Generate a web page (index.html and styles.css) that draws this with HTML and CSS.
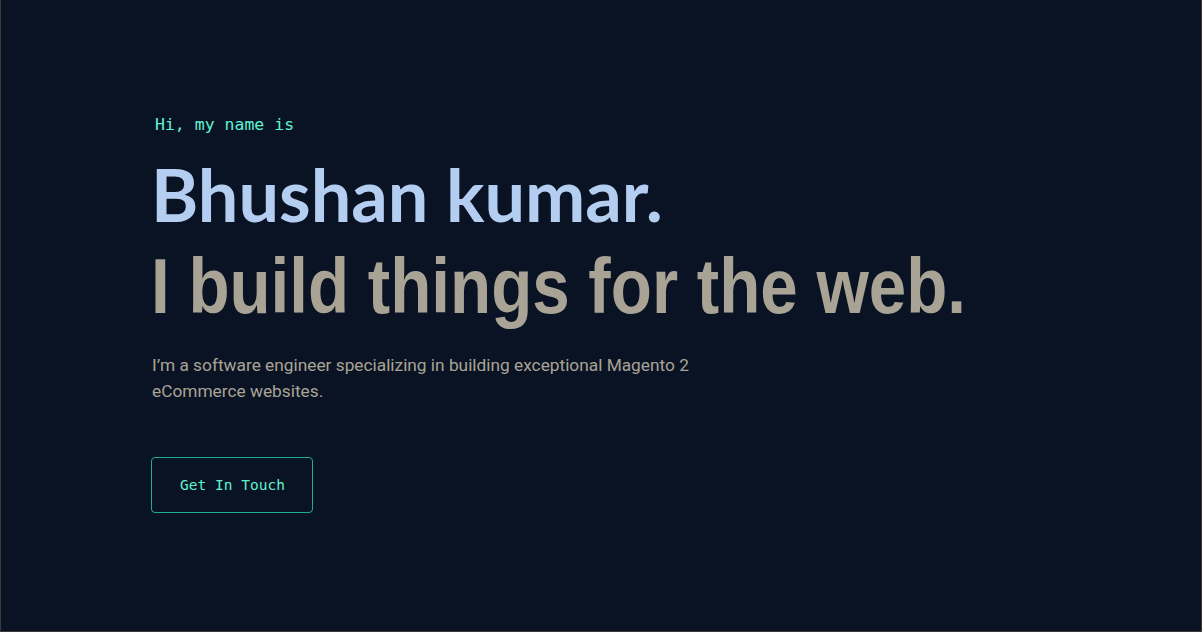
FILE: index.html
```html
<!DOCTYPE html>
<html lang="en">
<head>
<meta charset="utf-8">
<title>Bhushan kumar</title>
<link rel="stylesheet" href="styles.css">
</head>
<body>
<main class="frame">
  <section class="hero">
    <h1 class="greeting">Hi, my name is</h1>
    <h2 class="name">Bhushan kumar.</h2>
    <h3 class="tagline">I build things for the web.</h3>
    <p class="intro">I’m a software engineer specializing in building exceptional Magento 2 eCommerce websites.</p>
    <a class="cta" href="#contact">Get In Touch</a>
  </section>
</main>
</body>
</html>
```
FILE: styles.css
```css
* { box-sizing: border-box; }
html, body { margin: 0; padding: 0; height: 100%; }
body { background: #0a1324; }
.frame {
  height: 632px;
  width: 1202px;
  background: #0a1324;
  border-left: 1px solid #3a3a3a;
  border-right: 1px solid #3a3a3a;
  border-bottom: 1px solid #3a3a3a;
  padding: 110px 0 0 150px;
}
.hero { display: flex; flex-direction: column; align-items: flex-start; }
.greeting {
  margin: 0 0 0 4px;
  font-family: "DejaVu Sans Mono", monospace;
  font-weight: 400;
  font-size: 16.5px;
  line-height: 30px;
  color: #5ef2d2;
}
.name {
  margin: 10px 0 0 0;
  font-family: "Lato", sans-serif;
  font-weight: 700;
  font-size: 72px;
  line-height: 88px;
  color: #b4cef2;
}
.tagline {
  margin: 3px 0 0 0;
  font-family: "Liberation Sans", sans-serif;
  font-weight: 700;
  font-size: 77px;
  line-height: 91px;
  color: #a9a396;
  transform: scaleX(0.874);
  transform-origin: left center;
  white-space: nowrap;
}
.intro {
  margin: 20px 0 0 1px;
  max-width: 560px;
  font-family: "Roboto", sans-serif;
  font-size: 17.3px;
  line-height: 26px;
  color: #a9a396;
}
.cta {
  margin: 53px 0 0 0;
  width: 162px;
  height: 56px;
  display: flex;
  align-items: center;
  justify-content: center;
  padding-left: 1px;
  border: 1px solid #1fae8a;
  border-radius: 4px;
  font-family: "DejaVu Sans Mono", monospace;
  font-size: 14.5px;
  color: #5ef2d2;
  text-decoration: none;
}
```
